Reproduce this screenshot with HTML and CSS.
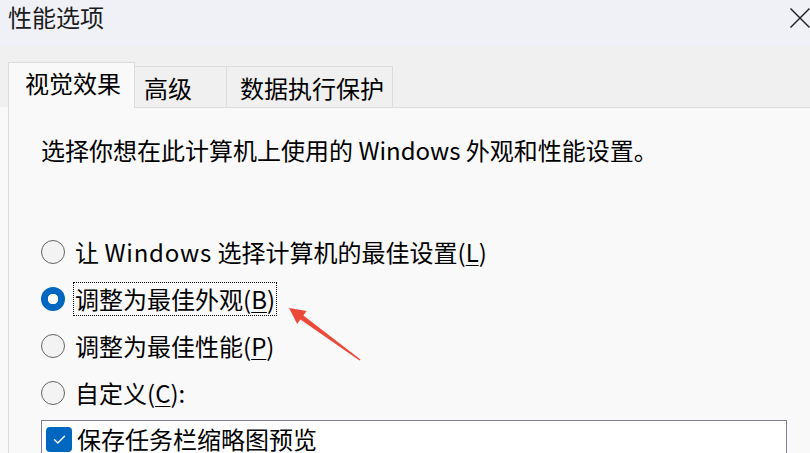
FILE: index.html
```html
<!DOCTYPE html>
<html lang="zh-CN">
<head>
<meta charset="utf-8">
<title>性能选项</title>
<link rel="stylesheet" href="styles.css">
</head>
<body>
<div class="titlebar">
  <span class="title">性能选项</span>
  <svg class="close" width="20" height="20" viewBox="0 0 20 20"><path d="M0.5 0.5 L19.5 19.5 M19.5 0.5 L0.5 19.5" stroke="#1a1a1a" stroke-width="1.4" fill="none"/></svg>
</div>
<div class="tabstrip">
  <div class="tab tab-active">视觉效果</div>
  <div class="tab tab-adv">高级</div>
  <div class="tab tab-dep">数据执行保护</div>
</div>
<div class="panel">
  <p class="intro">选择你想在此计算机上使用的 Windows 外观和性能设置。</p>
  <div class="options">
    <div class="option"><span class="radio"></span><span class="label">让 <span class="latin">Windows</span> 选择计算机的最佳设置(<u>L</u>)</span></div>
    <div class="option"><span class="radio radio-on"></span><span class="label label-focus">调整为最佳外观(<u>B</u>)</span></div>
    <div class="option"><span class="radio"></span><span class="label">调整为最佳性能(<u>P</u>)</span></div>
    <div class="option"><span class="radio"></span><span class="label">自定义(<u>C</u>):</span></div>
  </div>
  <div class="listbox">
    <div class="check-row">
      <span class="checkbox"><svg width="25" height="25" viewBox="0 0 25 25"><path d="M7.5 12.8 L10.8 16 L17.5 9.2" stroke="#fff" stroke-width="1.4" fill="none" stroke-linecap="round" stroke-linejoin="round"/></svg></span>
      <span class="check-label">保存任务栏缩略图预览</span>
    </div>
  </div>
</div>
<svg class="arrow" width="80" height="60" viewBox="285 305 80 60"><polygon points="289,308 306.6,311 303.4,315.5 360.5,359.5 359.5,360.5 300.4,319.5 297.2,324" fill="#ec4a38"/></svg>
</body>
</html>
```
FILE: styles.css
```css
* { box-sizing: border-box; }
html, body { margin: 0; padding: 0; }
body {
  width: 810px;
  height: 453px;
  overflow: hidden;
  font-family: "Noto Sans CJK SC", "Noto Sans", sans-serif;
  font-size: 24px;
  line-height: 32px;
  color: #000;
  background: #f9f9f9;
  position: relative;
}
.titlebar {
  height: 46px;
  background: #eff1f7;
  display: flex;
  justify-content: space-between;
  align-items: flex-start;
  padding-left: 8px;
}
.title { color: #1b1b1b; line-height: 34px; }
.close { margin-top: 8px; display: block; }
.tabstrip {
  background: #f0f0f0;
  display: flex;
  align-items: flex-end;
  padding: 16px 0 0 8px;
}
.tab {
  background: #f0f0f0;
  border: 1px solid #dcdcdc;
  border-bottom: none;
  height: 41px;
  padding-top: 5px;
  white-space: nowrap;
}
.tab + .tab { border-left: none; }
.tab-active {
  background: #f9f9f9;
  height: 46px;
  margin-bottom: -1px;
  padding: 4px 0 0 16px;
  width: 127px;
  position: relative;
  z-index: 1;
  border-right: 1px solid #dcdcdc;
}
.tab-adv { width: 92px; padding-left: 9px; }
.tab-dep { width: 166px; padding-left: 13px; }
.panel {
  border-top: 1px solid #dcdcdc;
  border-left: 1px solid #dcdcdc;
  margin-left: 8px;
  background: #f9f9f9;
  padding: 26px 23px 0 32px;
  height: 346px;
  overflow: hidden;
}
.intro { margin: 0; }
.options {
  margin-top: 62px;
  display: flex;
  flex-direction: column;
}
.option {
  height: 47px;
  display: flex;
  align-items: center;
  gap: 8px;
}
.radio {
  width: 24px;
  height: 24px;
  border-radius: 50%;
  border: 1.5px solid #646464;
  background: #f3f3f3;
  flex: none;
}
.radio-on {
  border: none;
  background: radial-gradient(circle, #fff 0 5px, #0067c0 5.5px);
}
.label {
  border: 1px solid transparent;
  padding: 0 1px;
  line-height: 32px;
  white-space: nowrap;
}
.latin { letter-spacing: 0.8px; }
.label-focus { border: 1px dotted #000; }
u { text-underline-offset: 3px; text-decoration-thickness: 1px; }
.listbox {
  margin-top: 4px;
  background: #fff;
  border: 1px solid #828092;
  height: 60px;
  padding: 5px 0 0 4px;
}
.check-row { display: flex; align-items: center; gap: 5px; }
.checkbox {
  width: 26px;
  height: 25px;
  border-radius: 4px;
  background: #0067c0;
  display: flex;
  align-items: center;
  justify-content: center;
  flex: none;
}
.checkbox svg { display: block; }
.check-label { line-height: 26px; }
.arrow { position: absolute; left: 285px; top: 305px; }
```
